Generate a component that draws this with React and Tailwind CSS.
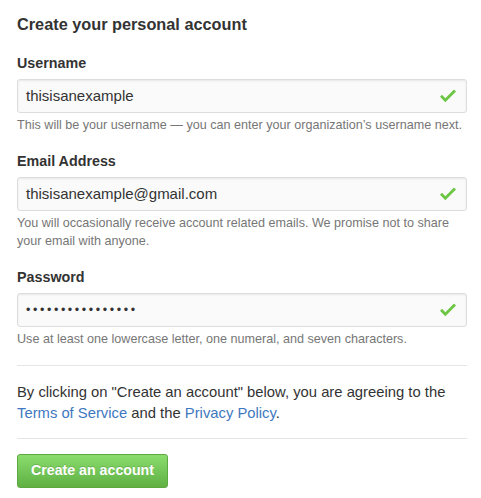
import React from 'react';

const Check = () => (
  <svg
    className="absolute right-[10px] top-1/2 -translate-y-1/2"
    width="16"
    height="13"
    viewBox="0 3.5 12 9.75"
    fill="#6cc644"
  >
    <path d="M12 5l-8 8-4-4 1.5-1.5L4 10l6.5-6.5L12 5z" />
  </svg>
);

const Field = ({ label, value, note, password }) => (
  <div className="mb-[17px]">
    <div className="text-[14.3px] leading-[20px] font-bold mb-[6px]">{label}</div>
    <div className="relative h-[34px] rounded-[3px] border border-[#dddddd] bg-[#fafafa] shadow-[inset_0_1px_2px_rgba(0,0,0,0.075)] flex items-center pl-[8px] pr-[32px]">
      {password ? (
        <span className="text-[12.5px] tracking-[2.6px] text-[#333]">{value}</span>
      ) : (
        <span className="text-[15px] text-[#333]">{value}</span>
      )}
      <Check />
    </div>
    <p className="mt-[3px] text-[12.6px] leading-[18px] text-[#767676]">{note}</p>
  </div>
);

export default function App() {
  return (
    <div
      className="bg-white min-h-screen text-[#333]"
      style={{ fontFamily: '"Liberation Sans", Helvetica, Arial, sans-serif' }}
    >
      <div className="ml-[17px] w-[450px] pt-[12px]">
        <h2 className="text-[16.3px] leading-[24px] font-bold mb-[17px]">Create your personal account</h2>

        <Field
          label="Username"
          value="thisisanexample"
          note="This will be your username — you can enter your organization’s username next."
        />
        <Field
          label="Email Address"
          value="thisisanexample@gmail.com"
          note="You will occasionally receive account related emails. We promise not to share your email with anyone."
        />
        <Field
          label="Password"
          value="••••••••••••••••"
          password
          note="Use at least one lowercase letter, one numeral, and seven characters."
        />

        <div className="border-t border-[#e5e5e5] pt-[16px] pb-[14px] text-[14.8px] leading-[21px]">
          By clicking on "Create an account" below, you are agreeing to the{' '}
          <a className="text-[#4078c0]" href="#">Terms of Service</a> and the{' '}
          <a className="text-[#4078c0]" href="#">Privacy Policy</a>.
        </div>

        <div className="border-t border-[#e5e5e5] pt-[15px]">
          <button className="h-[34px] w-[151px] flex items-center justify-center rounded-[3px] border border-[#5ca941] bg-gradient-to-b from-[#8add6d] to-[#60b044] text-white text-[14.2px] font-bold [text-shadow:0_-1px_0_rgba(0,0,0,0.15)]">
            Create an account
          </button>
        </div>
      </div>
    </div>
  );
}
